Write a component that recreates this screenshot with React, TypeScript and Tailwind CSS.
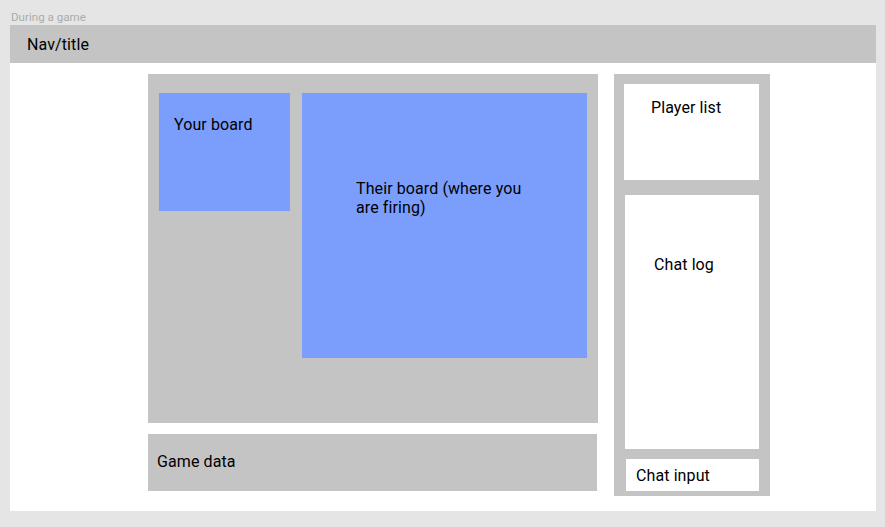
import React from 'react';

const font = { fontFamily: 'Roboto, "Noto Sans", sans-serif' };

const App: React.FC = () => {
  return (
    <div className="w-[885px] h-[527px] bg-[#e5e5e5] overflow-hidden" style={font}>
      <div className="h-[25px] pl-[11px] pt-[11px] text-[11.6px] leading-[13px] text-[#ababab]">
        During a game
      </div>

      <div className="ml-[10px] w-[866px] h-[486px] bg-white flex flex-col text-black text-base leading-[19px] tracking-[0.1px]">
        {/* nav */}
        <div className="h-[38px] bg-[#c4c4c4] flex items-center pl-[17px]">Nav/title</div>

        <div className="flex pl-[138px] pt-[11px] gap-[16px]">
          {/* game column */}
          <div className="w-[450px] flex flex-col gap-[11px]">
            <div className="h-[349px] bg-[#c4c4c4] flex items-start gap-[12px] pl-[11px] pt-[19px]">
              <div className="w-[131px] h-[118px] bg-[#7b9efc] pl-[15px] pt-[22px]">Your board</div>
              <div className="w-[285px] h-[265px] bg-[#7b9efc] pl-[54px] pt-[86px]">
                <div className="w-[180px]">Their board (where you are firing)</div>
              </div>
            </div>
            <div className="w-[449px] h-[57px] bg-[#c4c4c4] pl-[9px] pt-[18px]">Game data</div>
          </div>

          {/* side column */}
          <div className="w-[156px] h-[422px] bg-[#c4c4c4] flex flex-col pl-[10px] pr-[11px] pt-[10px]">
            <div className="h-[96px] bg-white pl-[27px] pt-[14px]">Player list</div>
            <div className="ml-[1px] mt-[15px] h-[254px] bg-white pl-[29px] pt-[60px]">Chat log</div>
            <div className="ml-[2px] mt-[10px] h-[32px] bg-white pl-[10px] pt-[7px]">Chat input</div>
          </div>
        </div>
      </div>
    </div>
  );
};

export default App;
